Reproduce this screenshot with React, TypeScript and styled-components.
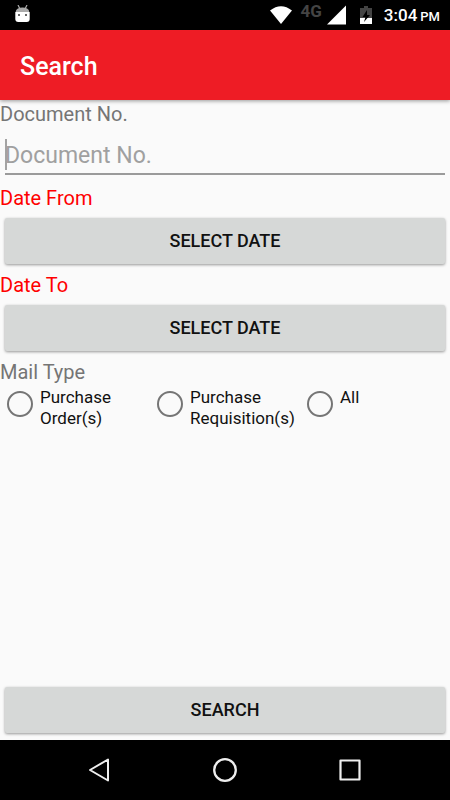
import React from 'react';
import styled, { createGlobalStyle } from 'styled-components';

const GlobalStyle = createGlobalStyle`
  * { box-sizing: border-box; }
  body { margin: 0; background: #fafafa; font-family: Roboto, sans-serif; }
`;

const Screen = styled.div`
  min-height: 100vh;
  display: flex;
  flex-direction: column;
  background: #fafafa;
`;

const StatusBar = styled.div`
  height: 30px;
  padding: 0 10px 0 15px;
  display: flex;
  align-items: center;
  background: #000;
  color: #fff;
`;

const StatusIcons = styled.div`
  margin-left: auto;
  display: flex;
  align-items: center;
`;

const Network = styled.span`
  margin: 0 5px 8px 9px;
  font-size: 17px;
  line-height: 16px;
  font-weight: 700;
  color: #444;
`;

const Battery = styled.svg`
  margin-left: 14px;
`;

const Clock = styled.span`
  margin-left: 12px;
  padding-top: 2px;
  font-size: 17px;
  line-height: 24px;
  font-weight: 500;
  small { font-size: 13px; margin-left: 3px; }
`;

const AppBar = styled.header`
  height: 70px;
  padding: 0 20px;
  display: flex;
  align-items: center;
  background: #ee1c25;
  box-shadow: 0 1px 4px rgba(0, 0, 0, 0.4);
  z-index: 1;
`;

const Title = styled.h1`
  margin: 0;
  padding-top: 3px;
  font-size: 25px;
  line-height: 30px;
  font-weight: 500;
  color: #fff;
`;

const Form = styled.form`
  flex: 1;
  display: flex;
  flex-direction: column;
`;

const Label = styled.label<{ $required?: boolean }>`
  font-size: 20px;
  line-height: 28px;
  color: ${p => (p.$required ? '#ff0000' : '#757575')};
`;

const Field = styled.div`
  margin: 11px 5px 9px;
  height: 36px;
  display: flex;
  align-items: flex-start;
  border-bottom: 2px solid #9a9a9a;
`;

const Caret = styled.span`
  width: 2px;
  height: 31px;
  margin-right: -2px;
  background: #a3a3a3;
`;

const TextField = styled.input`
  flex: 1;
  min-width: 0;
  height: 34px;
  padding: 0;
  border: 0;
  background: none;
  outline: none;
  font: 23px/34px Roboto, sans-serif;
  color: #111;
  &::placeholder { color: #a0a0a0; opacity: 1; }
`;

const Button = styled.button`
  margin: 6px 5px 7px;
  height: 46px;
  padding: 0;
  border: 0;
  border-radius: 2px;
  background: #d6d8d7;
  box-shadow: 0 1px 3px rgba(0, 0, 0, 0.4);
  font: 500 18px/24px Roboto, sans-serif;
  color: #111;
`;

const Options = styled.div`
  padding-top: 1px;
  display: grid;
  grid-template-columns: repeat(3, minmax(0, 1fr));
`;

const Option = styled.label`
  display: flex;
  align-items: flex-start;
  font-size: 17px;
  line-height: 21px;
  color: #111;
`;

const Radio = styled.input`
  appearance: none;
  flex: none;
  width: 26px;
  height: 26px;
  margin: 4px 7px;
  border: 2px solid #757575;
  border-radius: 50%;
  &:checked { background: radial-gradient(#757575 50%, transparent 54%); }
`;

const Footer = styled.div`
  margin-top: auto;
  display: grid;
`;

const NavBar = styled.nav`
  height: 60px;
  display: flex;
  justify-content: center;
  gap: 65px;
  background: #000;
`;

const NavButton = styled.button`
  width: 60px;
  padding: 0;
  border: 0;
  display: grid;
  place-items: center;
  background: none;
`;

export default function App() {
  return (
    <Screen>
      <GlobalStyle />
      <StatusBar>
        <svg width="15" height="20" viewBox="0 0 15 20">
          <path d="M3 0l2 4M12 0l-2 4" stroke="#aaa" strokeWidth="1.2" />
          <path d="M.7 7Q1 2.500 7.500 2.500T14.300 7z" fill="#aaa" />
          <path d="M.3 7h14.400v7q0 3-3 3H3.300q-3 0-3-3z" fill="#fff" />
          <circle cx="4" cy="10" r="1" fill="#333" />
          <circle cx="11" cy="10" r="1" fill="#333" />
        </svg>
        <StatusIcons>
          <svg width="22" height="20" viewBox="0 0 22 20" fill="#fff"><path d="M11 19 0 5.500Q11-3 22 5.500z" /></svg>
          <Network>4G</Network>
          <svg width="19" height="20" viewBox="0 0 19 20" fill="#fff"><path d="M19 .5v19H0z" /></svg>
          <Battery width="12" height="20" viewBox="0 0 12 20">
            <path d="M4 1h4v2h4v10H0V3h4z" fill="#444" />
            <path d="M0 13h12v6H0z" fill="#fff" />
            <path d="M7 5 2.500 12H5.500L4 17 10 10H7z" fill="#000" />
          </Battery>
          <Clock>3:04<small>PM</small></Clock>
        </StatusIcons>
      </StatusBar>
      <AppBar><Title>Search</Title></AppBar>
      <Form onSubmit={e => e.preventDefault()}>
        <Label htmlFor="doc">Document No.</Label>
        <Field>
          <Caret />
          <TextField id="doc" placeholder="Document No." />
        </Field>
        <Label htmlFor="from" $required>Date From</Label>
        <Button id="from" type="button">SELECT DATE</Button>
        <Label htmlFor="to" $required>Date To</Label>
        <Button id="to" type="button">SELECT DATE</Button>
        <Label as="span" id="mail-type">Mail Type</Label>
        <Options role="radiogroup" aria-labelledby="mail-type">
          {['Purchase Order(s)', 'Purchase Requisition(s)', 'All'].map(t => (
            <Option key={t}><Radio type="radio" name="mail" value={t} />{t}</Option>
          ))}
        </Options>
        <Footer><Button type="submit">SEARCH</Button></Footer>
      </Form>
      <NavBar>
        <NavButton aria-label="Back"><svg width="22" height="24" viewBox="0 0 22 24" fill="none" stroke="#eee" strokeWidth="2" strokeLinejoin="round"><path d="M19 1.500v21L1 12z" /></svg></NavButton>
        <NavButton aria-label="Home"><svg width="26" height="26" fill="none" stroke="#eee" strokeWidth="2.300"><circle cx="13" cy="13" r="10.800" /></svg></NavButton>
        <NavButton aria-label="Recent apps"><svg width="22" height="22" fill="none" stroke="#eee" strokeWidth="2.200" strokeLinejoin="round"><path d="M1.500 1.500h19v19h-19z" /></svg></NavButton>
      </NavBar>
    </Screen>
  );
}
